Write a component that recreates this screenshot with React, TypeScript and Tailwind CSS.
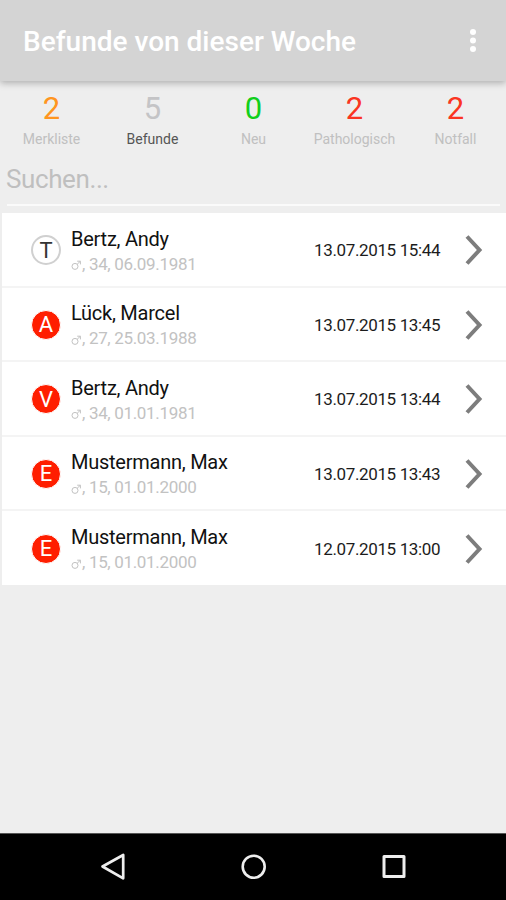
import clsx from 'clsx';

interface Counter {
  value: number;
  label: string;
  color: string;
  active?: boolean;
}

interface Befund {
  code: string;
  urgent: boolean;
  name: string;
  age: number;
  birthday: string;
  date: string;
}

const counters: Counter[] = [
  { value: 2, label: 'Merkliste', color: 'text-[#ff9520]' },
  { value: 5, label: 'Befunde', color: 'text-[#c4c4c6]', active: true },
  { value: 0, label: 'Neu', color: 'text-[#12cf1c]' },
  { value: 2, label: 'Pathologisch', color: 'text-[#fa3522]' },
  { value: 2, label: 'Notfall', color: 'text-[#fa3522]' },
];

const befunde: Befund[] = [
  { code: 'T', urgent: false, name: 'Bertz, Andy', age: 34, birthday: '06.09.1981', date: '13.07.2015 15:44' },
  { code: 'A', urgent: true, name: 'Lück, Marcel', age: 27, birthday: '25.03.1988', date: '13.07.2015 13:45' },
  { code: 'V', urgent: true, name: 'Bertz, Andy', age: 34, birthday: '01.01.1981', date: '13.07.2015 13:44' },
  { code: 'E', urgent: true, name: 'Mustermann, Max', age: 15, birthday: '01.01.2000', date: '13.07.2015 13:43' },
  { code: 'E', urgent: true, name: 'Mustermann, Max', age: 15, birthday: '01.01.2000', date: '12.07.2015 13:00' },
];

function Header() {
  return (
    <header className="relative z-10 flex h-[81px] shrink-0 items-center justify-between bg-[#d4d4d4] pl-[23px] pr-[28px] shadow-[0_2px_7px_rgba(0,0,0,0.28)]">
      <h1 className="pt-[2px] text-[28px] leading-8 font-medium whitespace-nowrap text-white">
        Befunde von dieser Woche
      </h1>
      <button aria-label="Menü">
        <svg width="10" height="26" viewBox="0 0 10 26" fill="white">
          <circle cx="5" cy="4" r="3" />
          <circle cx="5" cy="12.5" r="3" />
          <circle cx="5" cy="21" r="3" />
        </svg>
      </button>
    </header>
  );
}

function MaleIcon() {
  return (
    <svg width="11" height="12" viewBox="0 0 11 12" fill="none" stroke="currentColor" strokeWidth="1" className="mt-[3px]">
      <circle cx="4" cy="7.4" r="3" />
      <path d="M6.2 5.2 9.2 2.4M6.2 2.2h3.2v3.2" />
    </svg>
  );
}

function BefundRow({ befund }: { befund: Befund }) {
  return (
    <li className="flex h-[74.5px] items-center border-b-2 border-[#f4f4f4] pt-[2px] pl-[29px] last:h-[73.5px] last:border-b-0">
      <span
        className={clsx(
          'flex size-[30px] shrink-0 items-center justify-center rounded-full pt-px text-[22px] leading-none',
          befund.urgent
            ? 'border border-white bg-[#ff1e00] text-white'
            : 'border-2 border-[#d0d0d0] bg-white text-[#333]',
        )}
      >
        {befund.code}
      </span>
      <div className="ml-[10px] flex-1 pt-[2px] whitespace-nowrap">
        <div className="text-[20px] leading-6 tracking-[-0.25px] text-[#111]">{befund.name}</div>
        <div className="mt-[1px] flex items-center text-[17px] leading-6 tracking-[-0.33px] text-[#c2c2c2]">
          <MaleIcon />
          <span>, {befund.age}, {befund.birthday}</span>
        </div>
      </div>
      <time className="w-[127px] pt-px text-[17px] tracking-[-0.36px] whitespace-nowrap text-[#1c1c1c]">{befund.date}</time>
      <svg width="18" height="30" viewBox="0 0 18 30" fill="none" stroke="#7d7d7d" strokeWidth="4" className="mr-[23px] ml-[24px]">
        <path d="M2 1.5 14.5 15 2 28.5" />
      </svg>
    </li>
  );
}

function NavigationBar() {
  return (
    <nav className="flex h-[67px] shrink-0 items-center justify-between border-t border-[#555] bg-black pr-[99px] pl-[100px] text-[#eee]">
      <svg width="26" height="28" viewBox="0 0 26 28" fill="none" stroke="currentColor" strokeWidth="2.7" strokeLinejoin="round">
        <path d="M2.5 13.5 23.2 2v23.3z" />
      </svg>
      <svg width="26" height="28" viewBox="0 0 26 28" fill="none" stroke="currentColor" strokeWidth="2.6">
        <circle cx="12.7" cy="13.7" r="11" />
      </svg>
      <svg width="26" height="28" viewBox="0 0 26 28" fill="none" stroke="currentColor" strokeWidth="3" strokeLinejoin="round">
        <rect x="3" y="3.5" width="20" height="20" />
      </svg>
    </nav>
  );
}

export default function App() {
  return (
    <div className="flex h-[900px] w-[506px] flex-col overflow-hidden bg-[#eee] font-['Roboto',sans-serif]">
      <Header />

      {/* Zähler */}
      <div className="grid h-[74px] shrink-0 grid-cols-5 pl-px">
        {counters.map((counter) => (
          <div key={counter.label} className="flex flex-col items-center pt-[10px]">
            <span className={clsx('text-[31px] leading-9', counter.color)}>{counter.value}</span>
            <span className={clsx('mt-[2px] text-[14px] leading-5', counter.active ? 'text-[#555]' : 'text-[#c0c0c0]')}>
              {counter.label}
            </span>
          </div>
        ))}
      </div>

      {/* Suche */}
      <div className="mr-[6px] ml-[7px] h-[51px] shrink-0 border-b-2 border-[#fafafa]">
        <input
          type="text"
          placeholder="Suchen..."
          className="-ml-px block h-[48px] w-full text-[26px] tracking-[-0.4px] placeholder-[#bfbfbf] outline-none"
        />
      </div>

      <ul className="mt-[7px] ml-[2px] bg-white">
        {befunde.map((befund) => (
          <BefundRow key={befund.date} befund={befund} />
        ))}
      </ul>

      <div className="flex-1" />
      <NavigationBar />
    </div>
  );
}
